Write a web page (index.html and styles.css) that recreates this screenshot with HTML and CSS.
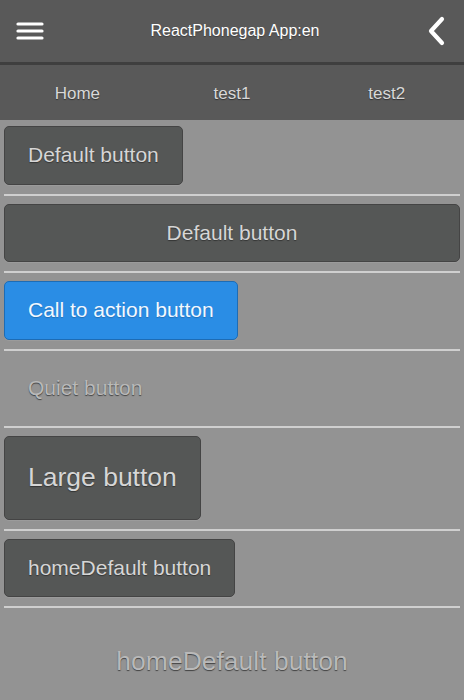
FILE: index.html
```html
<!DOCTYPE html>
<html>
<head>
<meta charset="utf-8">
<link rel="stylesheet" href="styles.css">
</head>
<body>
<header class="topbar">
  <button class="icon-btn" aria-label="menu">
    <svg width="28" height="20" viewBox="0 0 28 20"><g stroke="#fff" stroke-width="3.2" stroke-linecap="round"><line x1="2" y1="3" x2="26" y2="3"/><line x1="2" y1="10" x2="26" y2="10"/><line x1="2" y1="17" x2="26" y2="17"/></g></svg>
  </button>
  <div class="title">ReactPhonegap App:en</div>
  <button class="icon-btn" aria-label="back">
    <svg width="22" height="30" viewBox="0 0 22 30"><polyline points="16,3 5,15 16,27" fill="none" stroke="#fff" stroke-width="4.2" stroke-linecap="round" stroke-linejoin="round"/></svg>
  </button>
</header>
<nav class="tabs">
  <a class="tab">Home</a>
  <a class="tab">test1</a>
  <a class="tab">test2</a>
</nav>
<main class="content">
  <div class="row"><button class="btn">Default button</button></div>
  <hr class="sep">
  <div class="row"><button class="btn btn-block">Default button</button></div>
  <hr class="sep">
  <div class="row"><button class="btn btn-cta">Call to action button</button></div>
  <hr class="sep">
  <div class="row"><button class="btn btn-quiet">Quiet button</button></div>
  <hr class="sep">
  <div class="row"><button class="btn btn-large">Large button</button></div>
  <hr class="sep">
  <div class="row"><button class="btn">homeDefault button</button></div>
  <hr class="sep">
  <div class="row"><button class="btn btn-quiet btn-large btn-block btn-footer">homeDefault button</button></div>
</main>
</body>
</html>
```

FILE: styles.css
```css
html, body {
  margin: 0;
  padding: 0;
}
body {
  width: 464px;
  height: 700px;
  overflow: hidden;
  background: #939393;
  font-family: "Liberation Sans", Arial, sans-serif;
}
.topbar {
  height: 62px;
  background: #595959;
  border-bottom: 3px solid #3f3f3f;
  display: flex;
  align-items: center;
  justify-content: space-between;
  padding: 0 16px 0 16px;
}
.icon-btn {
  background: none;
  border: 0;
  padding: 0;
  display: flex;
  align-items: center;
}
.title {
  color: #fff;
  font-size: 16px;
  text-shadow: 0 1px 1px rgba(0,0,0,0.3);
}
.tabs {
  height: 52px;
  padding-top: 3px;
  background: #595959;
  display: flex;
  align-items: center;
}
.tab {
  flex: 1;
  text-align: center;
  color: #d8d8d8;
  font-size: 17px;
  text-shadow: 0 1px 1px rgba(0,0,0,0.45);
}
.content {
  padding: 6px 4px 0 4px;
}
.row {
  display: flex;
}
.sep {
  border: 0;
  border-top: 2px solid #cfcfcf;
  margin: 9px 0 8px 0;
}
.btn {
  box-sizing: border-box;
  height: 58.5px;
  padding: 0 23px;
  background: #555756;
  border: 1px solid #444;
  border-radius: 5px;
  color: #d6d6d6;
  font-family: "Liberation Sans", Arial, sans-serif;
  font-size: 21px;
  text-shadow: 0 1px 1px rgba(0,0,0,0.4);
  box-shadow: 0 1px 0 rgba(255,255,255,0.08);
}
.btn-block {
  flex: 1;
}
.btn-cta {
  background: #2a8de5;
  border-color: #1d6cb5;
  color: #f2f8ff;
  text-shadow: 0 1px 1px rgba(0,0,0,0.2);
}
.btn-quiet {
  background: transparent;
  border-color: transparent;
  box-shadow: none;
  color: #b9b9b9;
  text-shadow: 0 1px 1px rgba(0,0,0,0.55);
}
.btn-large {
  height: 83.5px;
  font-size: 26.5px;
}
.btn-footer {
  height: 90px;
}
```
